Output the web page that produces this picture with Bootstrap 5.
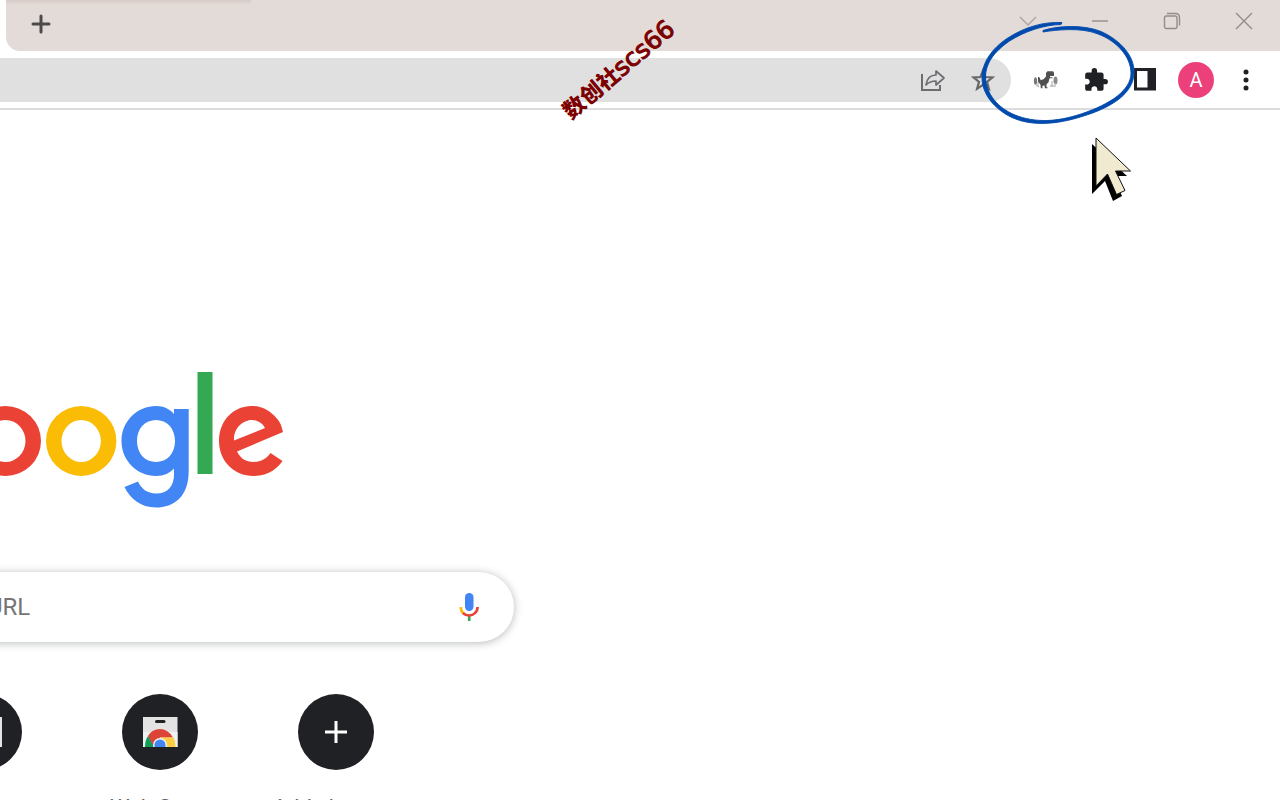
<!DOCTYPE html>
<html lang="en">
<head>
<meta charset="utf-8">
<meta name="viewport" content="width=device-width, initial-scale=1">
<title>New Tab</title>
<link href="https://cdn.jsdelivr.net/npm/bootstrap@5.3.0/dist/css/bootstrap.min.css" rel="stylesheet">
<style>
body { font-family: Roboto, "Noto Sans CJK SC", sans-serif; background: #fff; }
svg { display: block; }
.bare { background: none; border: 0; padding: 0; display: flex; align-items: center; justify-content: center; flex-shrink: 0; }
.tabstrip { height: 51px; background: #fff; }
.strip-fill { margin-left: 6px; background: linear-gradient(180deg, rgba(120,90,80,.12), transparent) 0 0 / 245px 5px no-repeat #e3dbd7; border-bottom-left-radius: 14px; }
.new-tab { width: 32px; height: 32px; margin: 8px 0 0 19px; }
.win-btn { width: 72px; height: 42px; }
.toolbar { height: 59px; padding: 7px 9px 7px 0; border-bottom: 2px solid #dcdcdc; }
.omnibox { height: 44px; background: #e0e0e0; border-radius: 0 22px 22px 0; margin-right: 10px; padding-right: 3px; }
.omnibox input { background: transparent; }
.tool-btn { width: 50px; height: 44px; }
.avatar { width: 36px; height: 36px; background: #ec407a; font-size: 20px; line-height: 36px; }
.search { width: 554px; height: 70px; margin: 62px 0 0 -40px; border-radius: 35px; box-shadow: 0 1px 8px rgba(32,33,36,.32); padding: 0 29px 0 40px; }
.search input { font-size: 24px; text-indent: -13px; color: #757575; }
.search input::placeholder { color: #757575; opacity: 1; }
.logo { margin-top: 262px; }
.tiles { margin: 52px 0 0 -104px; }
.tile { width: 176px; color: #5f6368; font-size: 22px; line-height: 28px; }
.tile-disc { width: 76px; height: 76px; background: #202124; margin-bottom: 24px; }
.sketch { top: 18px; right: 140px; pointer-events: none; }
.pointer { top: 135px; right: 146px; pointer-events: none; }
.watermark { left: 546px; top: 51px; width: 144px; font: 900 22px/34px "Noto Sans CJK SC", sans-serif; color: #7c0000; transform: rotate(-40deg); white-space: nowrap; text-align: center; pointer-events: none; }
.watermark span { font: 25px/34px "DejaVu Sans", sans-serif; -webkit-text-stroke: 1px #7c0000; }
</style>
</head>
<body class="vh-100 overflow-hidden position-relative">
<header>
  <div class="tabstrip d-flex">
    <div class="strip-fill d-flex flex-grow-1 justify-content-between align-items-start">
      <button class="bare new-tab" aria-label="New tab"><svg width="20" height="20" stroke="#4d4b4a" stroke-width="3" stroke-linecap="round"><path d="M10 2v16M2 10h16"/></svg></button>
      <div class="d-flex">
        <button class="bare win-btn" aria-label="Search tabs"><svg width="18" height="12" fill="none" stroke="#aaa39f" stroke-width="1.4"><path d="M1 2l8 8 8-8"/></svg></button>
        <button class="bare win-btn" aria-label="Minimize"><svg width="18" height="4" stroke="#99928f" stroke-width="1.5"><path d="M1 2h16"/></svg></button>
        <button class="bare win-btn" aria-label="Restore"><svg width="18" height="18" fill="none" stroke="#938d8a" stroke-width="1.4"><rect x="1.500" y="4" width="12.500" height="12.500" rx="2"/><path d="M4 1.500h8.500q4 0 4 4v8"/></svg></button>
        <button class="bare win-btn" aria-label="Close"><svg width="18" height="18" stroke="#938d8a" stroke-width="1.400"><path d="M1 1l16 16M17 1L1 17"/></svg></button>
      </div>
    </div>
  </div>
  <div class="toolbar d-flex">
    <div class="omnibox d-flex flex-grow-1">
      <input class="form-control border-0 shadow-none rounded-0" type="text" aria-label="Address">
      <button class="bare tool-btn" aria-label="Share"><svg width="26" height="26" fill="none" stroke="#6c6d70" stroke-width="2"><path d="M2 7v16h18v-5"/><path d="M6 18c1-7 5-10 10-10V4l8 7-8 7v-4c-4 0-7 1-10 4z" stroke-width="1.700" stroke-linejoin="round"/></svg></button>
      <button class="bare tool-btn" aria-label="Bookmark"><svg width="24" height="24" fill="none" stroke="#66676a" stroke-width="2.200"><path d="M12 2.500l2.500 6.500 7 .4-5.500 4.400 1.900 7-5.900-3.900-5.900 3.900 1.900-7L2.500 9.400l7-.4z"/></svg></button>
    </div>
    <button class="bare tool-btn" aria-label="Dinosaur extension"><svg width="26" height="20" viewBox="0 0 26 20"><ellipse cx="2.500" cy="11" rx="1.600" ry="3.800" fill="#777"/><ellipse cx="22.500" cy="10.500" rx="2" ry="4" fill="#888"/><path d="M3 15l3 2M5 12v4M17 16h4M19 11v6M22 13v4" stroke="#bbb" stroke-width="1.300"/><path fill="#505050" d="M13 3l1.500-1.800H20l1 1.500V6h-4v1.200h2.500v1h-3l-1 4-2 2v3h1v1h-2.600l-.5-3-2 .8v2.200H7.800l-.3-3.500L5 11.500V7h1.200l1.600 3.200 3-1.200 2.200-2.500z"/></svg></button>
    <button class="bare tool-btn" aria-label="Extensions"><svg width="26" height="26" viewBox="0 0 24 24" fill="#202124"><path d="M20.500 11H19V7c0-1.100-.9-2-2-2h-4V3.500a2.500 2.500 0 0 0-5 0V5H4c-1.100 0-1.990.9-1.990 2v3.800H3.500c1.490 0 2.700 1.210 2.700 2.700s-1.210 2.700-2.700 2.700H2V20c0 1.100.9 2 2 2h3.800v-1.500c0-1.490 1.210-2.700 2.700-2.700s2.700 1.210 2.700 2.700V22H17c1.100 0 2-.9 2-2v-4h1.500a2.500 2.500 0 0 0 0-5z"/></svg></button>
    <button class="bare tool-btn" aria-label="Side panel"><svg width="24" height="24"><path fill="#202124" fill-rule="evenodd" d="M0 0h22v22.500H0zM3 3h10.500v16.500H3z"/></svg></button>
    <button class="bare tool-btn" aria-label="Profile"><span class="avatar rounded-circle text-white">A</span></button>
    <button class="bare tool-btn" aria-label="Menu"><svg width="6" height="22" fill="#202124"><circle cx="3" cy="3" r="2.500"/><circle cx="3" cy="11" r="2.500"/><circle cx="3" cy="19" r="2.500"/></svg></button>
  </div>
</header>

<main>
  <svg class="logo" width="300" height="138" viewBox="0 0 300 138" role="img" aria-label="Google">
    <g fill-rule="evenodd">
      <path fill="#ea4335" d="M-30 69a35.500 35 0 0 1 71 0a35.500 35 0 0 1-71 0zM-14.500 69a20 21 0 0 0 40 0a20 21 0 0 0-40 0z"/>
      <path fill="#fbbc05" d="M46 69a35.200 35 0 0 1 70.400 0a35.200 35 0 0 1-70.400 0zM61.500 69a19.700 21 0 0 0 39.400 0a19.700 21 0 0 0-39.400 0z"/>
      <path fill="#4285f4" d="M174 42v-5h14.700v62c0 26-15 36.500-32.700 36.500-15.500 0-26-9-31.500-20.500l13.500-5.500c3 7 9 12 18 12 12 0 18-7.500 18-19v-6c-4 4.500-10 7.500-18 7.500-18.500 0-34.500-15-34.500-35s16-35 34.500-35c8 0 14 3.500 18 8zM137 69c0 12.500 8 21 19 21s19-8.500 19-21-8-21-19-21-19 8.500-19 21z"/>
      <path fill="#34a853" d="M197.500 0H212.500v102H197.500z"/>
      <path fill="#ea4335" d="M270.500 81l12 8c-4 6-13 15-29 15-20 0-34.500-15.500-34.500-35 0-21 15-35 32.500-35S279 48 281 53l2 7-46 19.500c3.500 7 9 10.500 16.500 10.500s13-3.500 17-9zM234 68.500l31-12.500c-2-4.500-7-8-13-8-8 0-18.500 7-18 20.500z"/>
    </g>
  </svg>
  <form class="search d-flex align-items-center" role="search">
    <input class="form-control border-0 shadow-none p-0 bg-transparent" type="text" placeholder="URL" aria-label="Search Google or type a URL">
    <button class="bare" type="button" aria-label="Search by voice"><svg width="32" height="32" viewBox="0 1 32 32" fill="none" stroke-width="2.600"><rect x="12" y="3" width="8.500" height="18" rx="4.200" fill="#4285f4"/><path stroke="#34a853" d="M16.200 25v6"/><path stroke="#fbbc05" d="M7.800 17c0 3 1 5 2.600 6.400"/><path stroke="#ea4335" d="M10 23c3.500 3.400 9 3.400 12 0 1.800-1.600 2.600-3.500 2.600-6"/></svg></button>
  </form>
  <div class="tiles d-flex text-center">
    <a href="#" class="tile flex-shrink-0 text-decoration-none d-flex flex-column align-items-center" aria-label="Shortcut">
      <span class="tile-disc rounded-circle d-flex align-items-center justify-content-center"><svg width="36" height="32"><path fill="#e3e3e3" d="M0 1h36v30H0z"/></svg></span>
    </a>
    <a href="#" class="tile flex-shrink-0 text-decoration-none d-flex flex-column align-items-center">
      <span class="tile-disc rounded-circle d-flex align-items-center justify-content-center"><svg width="36" height="32" viewBox="0 0 36 32"><path fill="#e3e3e3" d="M1 1h34.500v30H1z"/><path fill="#f1f1f1" d="M1 16h34.500v15H1z"/><rect x="13" y="4" width="10.500" height="3" rx="1.500" fill="#202124"/><path fill="#db4437" d="M6 20Q10 13 18 13t13 8.500H18L11 31z"/><path fill="#0f9d58" d="M3 31c0-5 1-8 3-11l6 11z"/><path fill="#ffcd40" d="M18 21.500h13.500q2 4 2 9.500H18z"/><path fill="#f1f1f1" d="M11 31v-2a7 7 0 0 1 14 0v2z"/><path fill="#4285f4" d="M12.500 31v-2a5.500 5.500 0 0 1 11 0v2z"/></svg></span>
      <span>Web Store</span>
    </a>
    <a href="#" class="tile flex-shrink-0 text-decoration-none d-flex flex-column align-items-center">
      <span class="tile-disc rounded-circle d-flex align-items-center justify-content-center"><svg width="24" height="24" stroke="#fff" stroke-width="3"><path d="M12 1v22M1 12h22"/></svg></span>
      <span>Add shortcut</span>
    </a>
  </div>
</main>

<svg class="sketch position-absolute" width="160" height="110" viewBox="980 18 160 110" fill="#004aad" stroke="#004aad" stroke-width=".9" stroke-linejoin="round">
  <path d="M1062 22.500c-17-1-37 4-55 16-15 10-25 24-25 39 0 17 13 32 30 40 20 9 45 7 70-1 30-9 51-23 52-43 1-17-13-33-33-42-17-7-43-6-58-1l0 1.500c12-2 38-5 55 2 19 7 33 23 33 39 0 17-20 31-50 41-24 8-46 9-66 1-17-7-29-21-29.500-38 0-13 8-25 24-36 16-10 34-16 51.500-16.500z"/>
</svg>
<svg class="pointer position-absolute" width="50" height="70" viewBox="1084 135 50 70">
  <path d="M1092 144v50l13-13 8 20 9-5-9-20h14z" fill="#000"/>
  <path d="M1096 138v48l11.500-12 9 20.500 8.500-4-9.500-19.500h15z" fill="#f0ead0" stroke="#111" stroke-width="1"/>
</svg>
<div class="watermark position-absolute">数创社<span>scs66</span></div>
<script src="https://cdn.jsdelivr.net/npm/bootstrap@5.3.0/dist/js/bootstrap.bundle.min.js"></script>
</body>
</html>
